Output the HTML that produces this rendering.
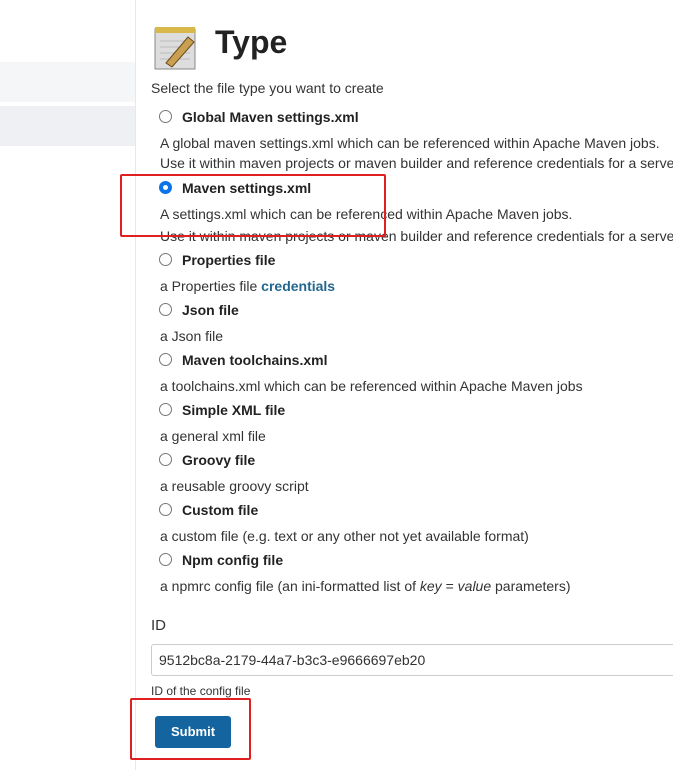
<!DOCTYPE html><html><head><style>
body{margin:0;width:673px;height:770px;background:#fff;font-family:"Liberation Sans",sans-serif;color:#333;position:relative;overflow:hidden;font-size:14px}
.a{position:absolute;white-space:nowrap}
.r{position:absolute;left:159px;width:11px;height:11px;border:1px solid #777;border-radius:50%;background:#fff}
.l{left:182px;font-weight:bold;color:#222}
.d{left:160px}
</style></head><body>
<div class="a" style="left:0;top:0;width:135px;height:770px;border-right:1px solid #e8e8e8"></div>
<div class="a" style="left:0;top:62px;width:135px;height:40px;background:#f5f6f8"></div>
<div class="a" style="left:0;top:106px;width:135px;height:40px;background:#eef0f3"></div>
<svg class="a" style="left:152px;top:23px" width="48" height="48" viewBox="0 0 48 48"><rect x="3" y="6" width="40" height="40" fill="#ddd" stroke="#888"/><rect x="3" y="4" width="40" height="6" fill="#d8b84a"/><g stroke="#bbb"><line x1="8" y1="18" x2="38" y2="18"/><line x1="8" y1="24" x2="38" y2="24"/><line x1="8" y1="30" x2="38" y2="30"/><line x1="8" y1="36" x2="38" y2="36"/></g><path d="M14 40 L36 14 L42 19 L20 44 Z" fill="#c9a050" stroke="#6b4c1d"/></svg>
<div class="a" style="left:215px;top:24px;font-size:32px;font-weight:bold;color:#222">Type</div>
<div class="a" style="left:151px;top:80px">Select the file type you want to create</div>
<div class="r" style="top:110px"></div><div class="a l" style="top:109px">Global Maven settings.xml</div>
<div class="a d" style="top:135px">A global maven settings.xml which can be referenced within Apache Maven jobs.</div>
<div class="a d" style="top:155px">Use it within maven projects or maven builder and reference credentials for a server</div>
<div class="r" style="top:181px;border:4px solid #0b74e8;width:5px;height:5px;left:159px"></div><div class="a l" style="top:180px">Maven settings.xml</div>
<div class="a d" style="top:206px">A settings.xml which can be referenced within Apache Maven jobs.</div>
<div class="a d" style="top:228px">Use it within maven projects or maven builder and reference credentials for a server</div>
<div class="r" style="top:253px"></div><div class="a l" style="top:252px">Properties file</div>
<div class="a d" style="top:278px">a Properties file <b style="color:#23678f">credentials</b></div>
<div class="r" style="top:303px"></div><div class="a l" style="top:302px">Json file</div>
<div class="a d" style="top:328px">a Json file</div>
<div class="r" style="top:353px"></div><div class="a l" style="top:352px">Maven toolchains.xml</div>
<div class="a d" style="top:378px">a toolchains.xml which can be referenced within Apache Maven jobs</div>
<div class="r" style="top:403px"></div><div class="a l" style="top:402px">Simple XML file</div>
<div class="a d" style="top:428px">a general xml file</div>
<div class="r" style="top:453px"></div><div class="a l" style="top:452px">Groovy file</div>
<div class="a d" style="top:478px">a reusable groovy script</div>
<div class="r" style="top:503px"></div><div class="a l" style="top:502px">Custom file</div>
<div class="a d" style="top:528px">a custom file (e.g. text or any other not yet available format)</div>
<div class="r" style="top:553px"></div><div class="a l" style="top:552px">Npm config file</div>
<div class="a d" style="top:578px">a npmrc config file (an ini-formatted list of <i>key</i> = <i>value</i> parameters)</div>
<div class="a" style="left:151px;top:617px;font-size:15px">ID</div>
<div class="a" style="left:151px;top:644px;width:530px;height:32px;border:1px solid #ccc;border-radius:3px;box-sizing:border-box;padding:7px 7px;font-size:14px">9512bc8a-2179-44a7-b3c3-e9666697eb20</div>
<div class="a" style="left:151px;top:684px;font-size:12px">ID of the config file</div>
<div class="a" style="left:155px;top:716px;width:76px;height:32px;background:#14659f;border-radius:3px;color:#fff;font-weight:bold;font-size:13px;text-align:center;line-height:32px">Submit</div>
<div class="a" style="left:120px;top:174px;width:262px;height:59px;border:2px solid #e02020;border-radius:2px"></div>
<div class="a" style="left:130px;top:698px;width:117px;height:58px;border:2px solid #e02020;border-radius:2px"></div>
</body></html>
